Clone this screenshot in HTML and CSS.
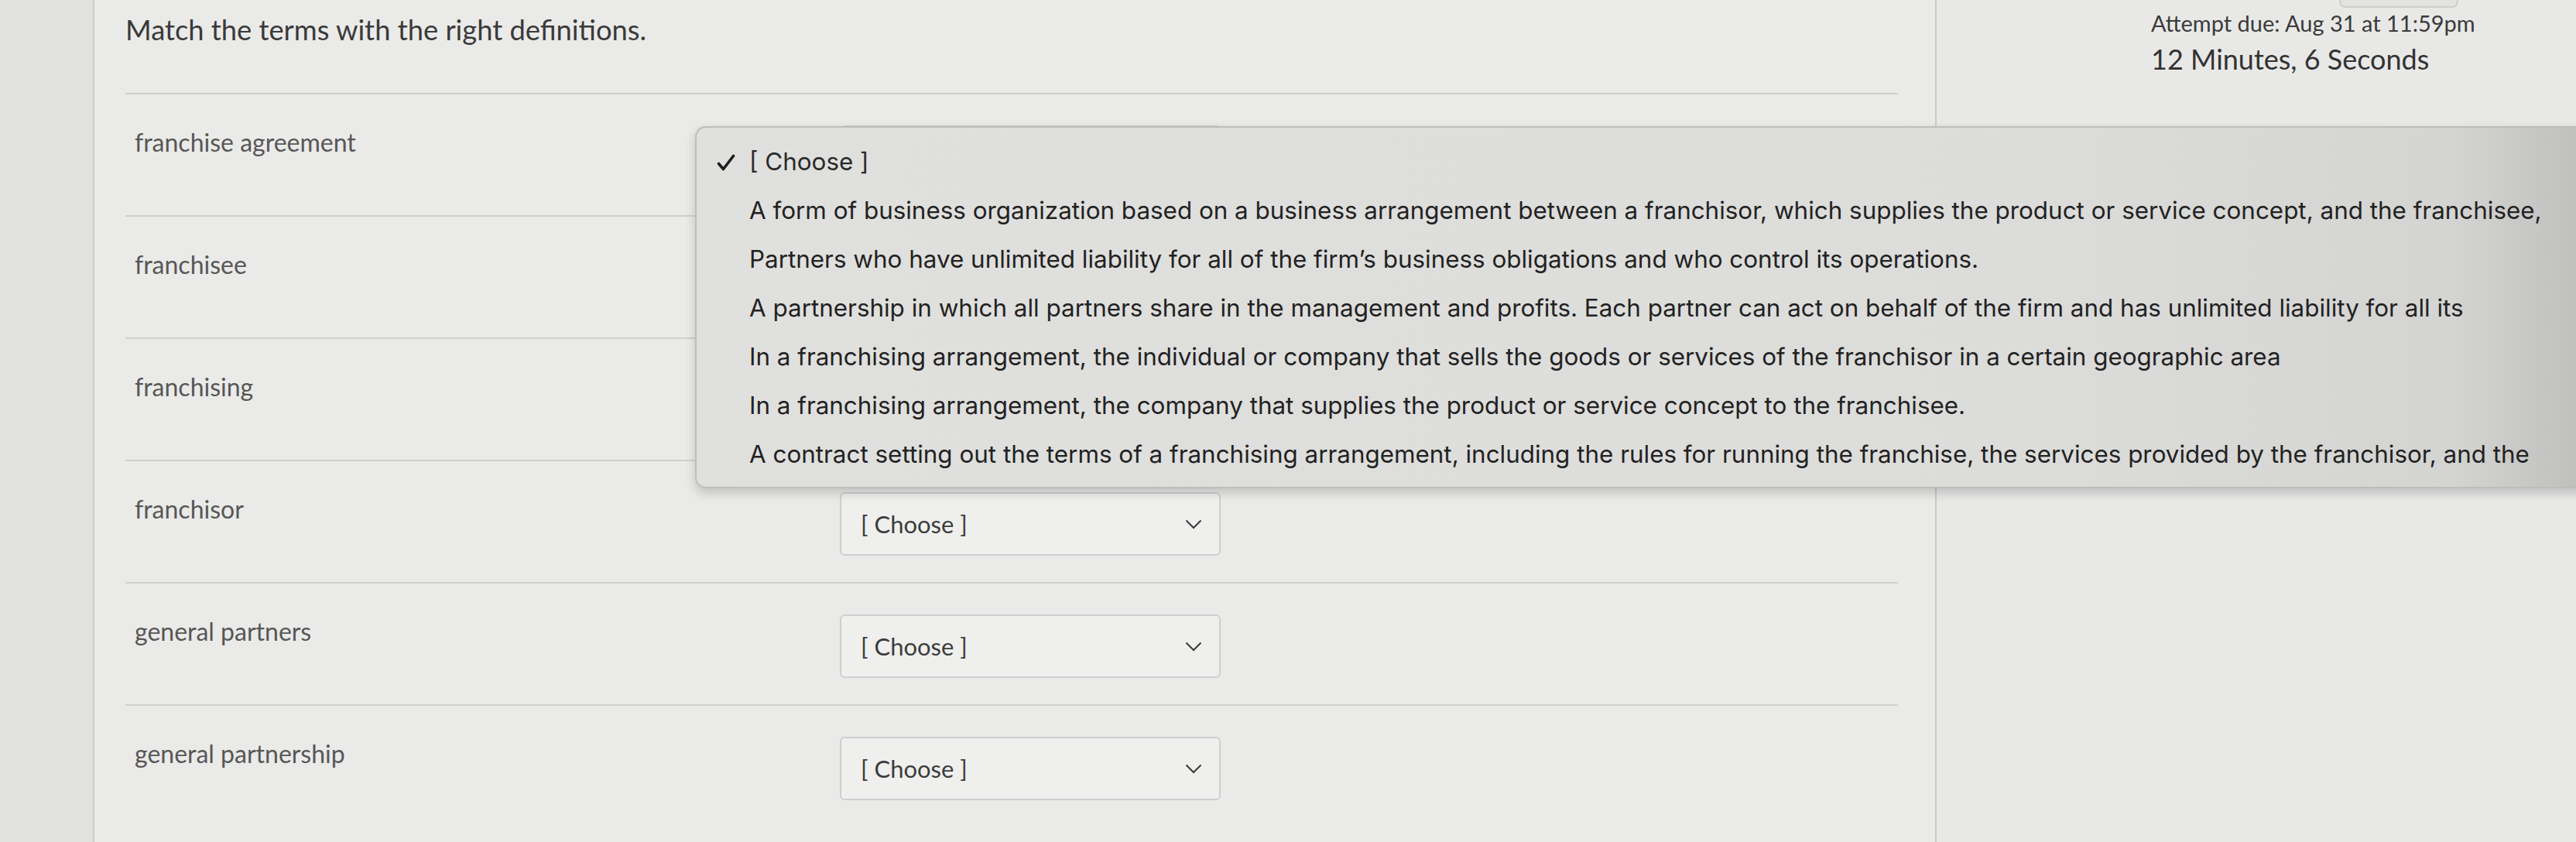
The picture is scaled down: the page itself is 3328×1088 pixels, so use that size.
FILE: index.html
```html
<!DOCTYPE html>
<html lang="en">
<head>
<meta charset="utf-8">
<title>Match the terms</title>
<link rel="stylesheet" href="styles.css">
</head>
<body>
<div class="page">
  <div class="gutter"></div>
  <main class="main">
    <header class="q-header">
      <h1 class="q-title">Match the terms with the right definitions.</h1>
    </header>
    <div class="rows">
      <div class="row covered">
        <div class="term">franchise agreement</div>
        <div class="select"><span>[ Choose ]</span><svg class="chev" viewBox="0 0 22 13" width="22" height="13"><polyline points="1.5,1.5 11,11 20.5,1.5"/></svg></div>
      </div>
      <div class="row covered">
        <div class="term">franchisee</div>
        <div class="select"><span>[ Choose ]</span><svg class="chev" viewBox="0 0 22 13" width="22" height="13"><polyline points="1.5,1.5 11,11 20.5,1.5"/></svg></div>
      </div>
      <div class="row covered">
        <div class="term">franchising</div>
        <div class="select"><span>[ Choose ]</span><svg class="chev" viewBox="0 0 22 13" width="22" height="13"><polyline points="1.5,1.5 11,11 20.5,1.5"/></svg></div>
      </div>
      <div class="row">
        <div class="term">franchisor</div>
        <div class="select"><span>[ Choose ]</span><svg class="chev" viewBox="0 0 22 13" width="22" height="13"><polyline points="1.5,1.5 11,11 20.5,1.5"/></svg></div>
      </div>
      <div class="row">
        <div class="term">general partners</div>
        <div class="select"><span>[ Choose ]</span><svg class="chev" viewBox="0 0 22 13" width="22" height="13"><polyline points="1.5,1.5 11,11 20.5,1.5"/></svg></div>
      </div>
      <div class="row last">
        <div class="term">general partnership</div>
        <div class="select"><span>[ Choose ]</span><svg class="chev" viewBox="0 0 22 13" width="22" height="13"><polyline points="1.5,1.5 11,11 20.5,1.5"/></svg></div>
      </div>
    </div>
  </main>
  <aside class="sidebar">
    <div class="tab-btn"></div>
    <div class="due">Attempt due: Aug 31 at 11:59pm</div>
    <div class="timer">12 Minutes, 6 Seconds</div>
  </aside>

  <div class="popover">
    <div class="opt selected"><svg class="check" viewBox="0 0 24 22" width="24" height="22"><path d="M2.5 12.5 L8.5 19.5 L21.5 2.5"/></svg>[ Choose ]</div>
    <div class="opt">A form of business organization based on a business arrangement between a franchisor, which supplies the product or service concept, and the franchisee,</div>
    <div class="opt">Partners who have unlimited liability for all of the firm’s business obligations and who control its operations.</div>
    <div class="opt">A partnership in which all partners share in the management and profits. Each partner can act on behalf of the firm and has unlimited liability for all its</div>
    <div class="opt">In a franchising arrangement, the individual or company that sells the goods or services of the franchisor in a certain geographic area</div>
    <div class="opt">In a franchising arrangement, the company that supplies the product or service concept to the franchisee.</div>
    <div class="opt">A contract setting out the terms of a franchising arrangement, including the rules for running the franchise, the services provided by the franchisor, and the</div>
  </div>
</div>
</body>
</html>
```

FILE: styles.css
```css
html, body {
  margin: 0;
  padding: 0;
}

body {
  width: 3328px;
  height: 1088px;
  overflow: hidden;
  background: #e9e9e7;
  font-family: Lato, "Open Sans", sans-serif;
  color: #333;
}

.page {
  position: relative;
  display: flex;
  width: 3328px;
  height: 1088px;
  overflow: hidden;
}

.gutter {
  flex: none;
  width: 120px;
  background: #e1e1df;
  border-right: 2px solid #cfcfcd;
}

.main {
  flex: none;
  box-sizing: border-box;
  width: 2380px;
  padding: 0 48px 0 40px;
  border-right: 2px solid #cacac8;
  background: #eaeae8;
}

.q-header {
  box-sizing: border-box;
  height: 122px;
  padding-top: 17px;
  border-bottom: 2px solid #cfcfcd;
}

.q-title {
  margin: 0;
  font-family: Lato, sans-serif;
  font-weight: 400;
  font-size: 36.3px;
  line-height: 43px;
  color: #3a3a3a;
}

.row {
  box-sizing: border-box;
  display: grid;
  grid-template-columns: 911px 492px;
  align-items: start;
  height: 158px;
  padding-left: 12px;
  border-bottom: 2px solid #cfcfcd;
}

.row.last {
  border-bottom: none;
}

.term {
  padding-top: 42px;
  font-size: 32px;
  color: #575757;
}

.select {
  box-sizing: border-box;
  display: flex;
  align-items: center;
  justify-content: space-between;
  height: 82px;
  margin-top: 40px;
  padding: 0 22px 0 25px;
  border: 2px solid #cdcfd0;
  border-radius: 6px;
  background: #efefed;
  font-size: 31px;
  color: #3c3c3c;
}

.row.covered .select span {
  visibility: hidden;
}

.chev polyline {
  fill: none;
  stroke: #3a3a3a;
  stroke-width: 2;
}

.sidebar {
  flex: 1;
  padding-left: 277px;
  background: #e8e9e7;
}

.tab-btn {
  width: 154px;
  height: 10px;
  margin-left: 243px;
  box-sizing: border-box;
  border: 2px solid #cdcdcb;
  border-top: none;
  border-radius: 0 0 8px 8px;
  background: #e2e2e0;
}

.due {
  margin-top: 3px;
  font-size: 29px;
  line-height: 34px;
  color: #3a3a3a;
}

.timer {
  margin-top: 7px;
  font-size: 36px;
  line-height: 44px;
  color: #333;
}

.popover {
  position: absolute;
  left: 898px;
  top: 163px;
  width: 2470px;
  box-sizing: border-box;
  padding: 13px 0 10px 68px;
  border: 2px solid #bdbdbb;
  border-radius: 14px;
  background: linear-gradient(90deg, #e0e0de 0%, #dcdcda 70%, #d4d4d2 92%, #bbbbb9 100%);
  box-shadow: 0 6px 14px rgba(0, 0, 0, 0.18);
  font-family: Inter, "Liberation Sans", sans-serif;
  font-size: 31.4px;
  color: #222;
}

.opt {
  position: relative;
  height: 63px;
  line-height: 63px;
  white-space: nowrap;
}

.opt.selected {
  color: #2a2a2a;
}

.check {
  position: absolute;
  left: -42px;
  top: 21px;
}

.check path {
  fill: none;
  stroke: #1e1e1e;
  stroke-width: 3.6;
  stroke-linecap: round;
  stroke-linejoin: round;
}
```
